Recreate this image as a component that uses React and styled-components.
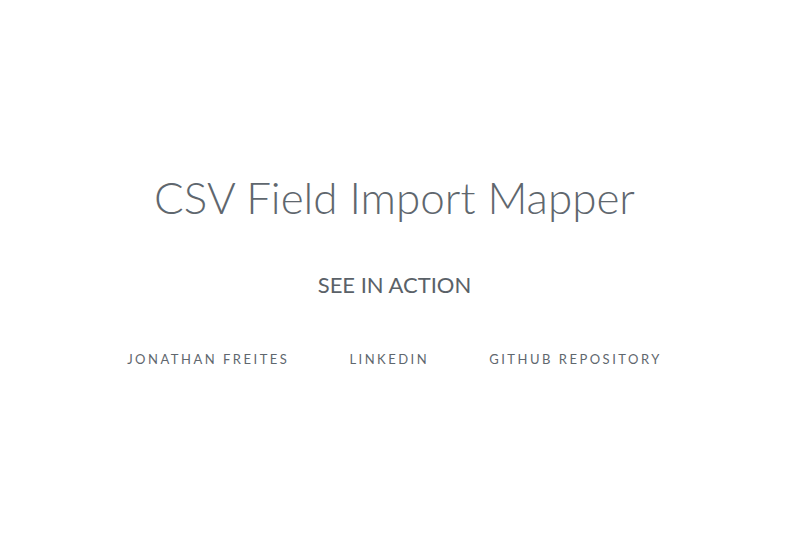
import React from 'react'
import styled, {createGlobalStyle} from 'styled-components'

const GlobalStyle = createGlobalStyle`
  html, body {
    margin: 0;
    padding: 0;
    background: #ffffff;
  }
  body {
    font-family: Lato, "Open Sans", sans-serif;
    color: #5f676e;
  }
`

const Page = styled.main`
  height: 557px;
  display: flex;
  flex-direction: column;
  align-items: center;
  padding: 171px 17px 0 0;
  box-sizing: border-box;
`

const Title = styled.h1`
  margin: 0;
  font-size: 44px;
  font-weight: 300;
  line-height: 53px;
  color: #5f676e;
`

const ActionLink = styled.a`
  margin-top: 48px;
  font-size: 22px;
  font-weight: 400;
  line-height: 26px;
  color: #5a6168;
  text-decoration: none;
  cursor: pointer;
`

const Footer = styled.nav`
  margin-top: 52px;
  display: flex;
  gap: 60px;
`

const FooterLink = styled.a`
  font-size: 13px;
  letter-spacing: 2.5px;
  line-height: 18px;
  color: #5f676e;
  text-decoration: none;
  cursor: pointer;
`

export default function App(){
  return(
    <>
      <GlobalStyle/>
      <Page>
        <Title>CSV Field Import Mapper</Title>
        <ActionLink>SEE IN ACTION</ActionLink>
        <Footer>
          <FooterLink>JONATHAN FREITES</FooterLink>
          <FooterLink>LINKEDIN</FooterLink>
          <FooterLink>GITHUB REPOSITORY</FooterLink>
        </Footer>
      </Page>
    </>
  )
}
